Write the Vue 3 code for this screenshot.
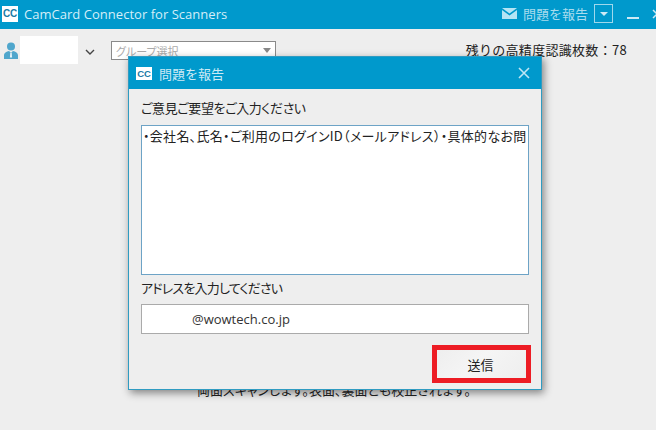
<script setup>
</script>

<template>
  <div class="app">
    <header class="bar">
      <span class="logo">CC</span>
      <span class="app-title">CamCard Connector for Scanners</span>
      <span class="spacer"></span>
      <svg class="mail" width="15" height="11" viewBox="0 0 15 11"><path d="M0 0h15L7.500 5.500z" fill="#b5e4f4"/><path d="M0 2l7.500 5.500L15 2v9H0z" fill="#b5e4f4"/></svg>
      <span class="report">問題を報告</span>
      <span class="drop"><i></i></span>
      <span class="min"></span>
      <svg class="close-main" width="10" height="10" viewBox="0 0 10 10"><path d="M1 1l8 8M1 9l8-8" stroke="#cdeaf5" stroke-width="1.500" fill="none"/></svg>
    </header>

    <section class="toolbar">
      <svg class="user" width="14" height="17" viewBox="0 0 14 17"><circle cx="7" cy="4.500" r="4" fill="#4fa6cc"/><path d="M0 17v-3.500c0-2.700 2.500-4 5-4.500l2 1.800L9 9c2.500.5 5 1.800 5 4.500V17z" fill="#4fa6cc"/><path d="M6.300 10.800h1.400l.4 4.700H5.900z" fill="#e6f3f8"/></svg>
      <span class="name"></span>
      <svg class="chev" width="10" height="6" viewBox="0 0 10 6"><path d="M1 1l4 4 4-4" stroke="#444" stroke-width="1.400" fill="none"/></svg>
      <div class="group"><span>グループ選択</span><i></i></div>
      <span class="spacer"></span>
      <span class="count">残りの高精度認識枚数：78</span>
    </section>

    <p class="behind">両面スキャンします。表面、裏面とも校正されます。</p>

    <div class="dialog">
      <div class="dlg-head">
        <span class="logo logo-small">CC</span>
        <span class="dlg-title">問題を報告</span>
        <span class="spacer"></span>
        <svg width="12" height="12" viewBox="0 0 12 12"><path d="M1 1l10 10M1 11L11 1" stroke="#bfe6f4" stroke-width="1.600" fill="none"/></svg>
      </div>
      <div class="dlg-body">
        <label class="lbl lbl1">ご意見ご要望をご入力ください</label>
        <div class="area">・会社名、氏名・ご利用のログインID（メールアドレス）・具体的なお問</div>
        <label class="lbl lbl2">アドレスを入力してください</label>
        <div class="input">@wowtech.co.jp</div>
        <div class="actions"><button class="send">送信</button></div>
      </div>
    </div>
  </div>
</template>

<style>
html, body { margin: 0; padding: 0; }
</style>

<style scoped>
.app {
  position: relative;
  width: 656px;
  height: 430px;
  overflow: hidden;
  background: #eeeeee;
  font-family: "Noto Sans CJK JP", "Noto Sans", sans-serif;
  font-feature-settings: "palt";
  color: #222;
}
.spacer { flex: 1; }
.bar {
  display: flex;
  align-items: center;
  height: 29px;
  box-sizing: border-box;
  padding: 0 0 2px 2px;
  background: #0099cc;
  color: #d4eef8;
}
.logo {
  display: flex;
  align-items: center;
  justify-content: center;
  width: 16px;
  height: 16px;
  background: #fff;
  color: #1a7ba6;
  font: bold 10px/16px "Liberation Sans", sans-serif;
  letter-spacing: -.2px;
}
.logo-small { height: 13px; font-size: 9.500px; line-height: 13px; }
.app-title {
  margin-left: 6px;
  margin-top: 2px;
  font: 13px/1 "Open Sans", sans-serif;
  letter-spacing: .03px;
}
.mail { margin-right: 6px; }
.report { font-size: 13px; color: #a9dcee; line-height: 1; font-feature-settings: normal; }
.drop {
  display: flex;
  align-items: center;
  justify-content: center;
  width: 17px;
  height: 17px;
  margin-left: 6px;
  border: 1px solid #9fd8ec;
}
.drop i {
  width: 0;
  height: 0;
  border: 4px solid transparent;
  border-top: 4px solid #cdeaf5;
  border-bottom: 0;
}
.min {
  width: 12px;
  height: 2px;
  margin: 9px 13px 0 14px;
  background: #cdeaf5;
}
.close-main { margin-right: -6px; flex: none; }
.toolbar {
  display: flex;
  align-items: center;
  height: 42px;
  padding-left: 4px;
  padding-right: 29px;
  box-sizing: border-box;
}
.user { margin-top: 1px; }
.name {
  width: 58px;
  height: 28px;
  margin-left: 2px;
  background: #fff;
}
.chev { margin-left: 7px; margin-top: 3px; }
.group {
  display: flex;
  align-items: center;
  justify-content: space-between;
  width: 165px;
  height: 19px;
  margin-left: 16px;
  margin-top: 1px;
  padding: 0 4px;
  box-sizing: border-box;
  border: 1px solid #8a8a8a;
  background: #fff;
  font-size: 11px;
  color: #aaa;
}
.group i {
  width: 0;
  height: 0;
  border: 4px solid transparent;
  border-top: 5px solid #888;
  border-bottom: 0;
}
.count { font-size: 13px; line-height: 1; letter-spacing: .3px; font-feature-settings: normal; margin-top: -1px; }
.behind {
  margin: 311px 0 0 197px;
  font-size: 13px;
  line-height: 16px;
  white-space: nowrap;
  color: #222;
}
.dialog {
  position: absolute;
  left: 128px;
  top: 56px;
  width: 414px;
  height: 334px;
  box-sizing: border-box;
  display: flex;
  flex-direction: column;
  background: #eeeeee;
  border: 1px solid #2f9bc1;
  box-shadow: 2px 3px 8px rgba(0, 0, 0, .45);
}
.dlg-head {
  display: flex;
  align-items: center;
  height: 32px;
  padding: 0 11px 0 7px;
  background: #0099cc;
  flex: none;
}
.dlg-title { margin-left: 7px; font-size: 13px; color: #cdeaf5; font-feature-settings: normal; }
.dlg-body { padding: 9px 12px 0 12px; display: flex; flex-direction: column; }
.lbl { font-size: 13px; line-height: 19px; color: #222; }
.lbl1 { letter-spacing: -.4px; }
.area {
  height: 150px;
  margin-top: 8px;
  padding: 0 0 0 1px;
  box-sizing: border-box;
  border: 1px solid #6da3c6;
  background: #fff;
  font-size: 13px;
  line-height: 19px;
  letter-spacing: .3px;
  white-space: nowrap;
}
.lbl2 { margin-top: 3px; letter-spacing: -.8px; }
.input {
  height: 30px;
  margin-top: 7px;
  padding-left: 50px;
  box-sizing: border-box;
  border: 1px solid #aaa;
  background: #fff;
  font: 13px/28px "Open Sans", sans-serif;
  color: #333;
}
.actions { display: flex; justify-content: flex-end; margin-top: 11px; }
.send {
  width: 99px;
  height: 38px;
  margin-right: -2px;
  box-sizing: border-box;
  border: 5px solid #ed1c24;
  background: linear-gradient(135deg, #eeeeee, #f5f5f5 45%, #eeeeee);
  font-family: "Noto Sans CJK JP", sans-serif;
  font-size: 13px;
  color: #222;
  padding: 0 2px 0 0;
}
</style>
